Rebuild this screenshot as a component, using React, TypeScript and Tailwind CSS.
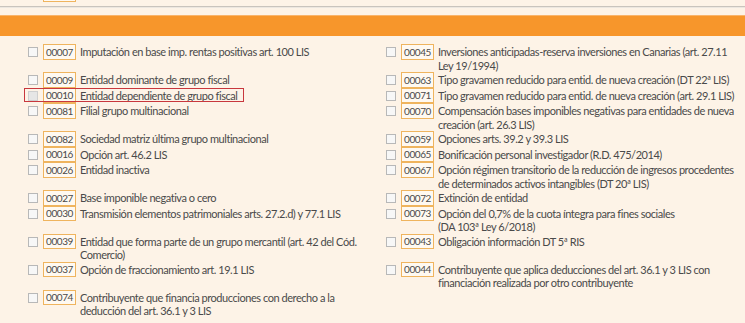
import React from "react";

type Item = {
  code: string;
  lines: string[];
  disabled?: boolean;
  highlight?: boolean;
};

type Row = [Item | null, Item | null];

const rows: Row[] = [
  [
    { code: "00007", lines: ["Imputación en base imp. rentas positivas art. 100 LIS"] },
    { code: "00045", lines: ["Inversiones anticipadas-reserva inversiones en Canarias (art. 27.11", "Ley 19/1994)"] },
  ],
  [
    { code: "00009", lines: ["Entidad dominante de grupo fiscal"] },
    { code: "00063", lines: ["Tipo gravamen reducido para entid. de nueva creación (DT 22ª LIS)"] },
  ],
  [
    { code: "00010", lines: ["Entidad dependiente de grupo fiscal"], disabled: true, highlight: true },
    { code: "00071", lines: ["Tipo gravamen reducido para entid. de nueva creación (art. 29.1 LIS)"] },
  ],
  [
    { code: "00081", lines: ["Filial grupo multinacional"] },
    { code: "00070", lines: ["Compensación bases imponibles negativas para entidades de nueva", "creación (art. 26.3 LIS)"] },
  ],
  [
    { code: "00082", lines: ["Sociedad matriz última grupo multinacional"] },
    { code: "00059", lines: ["Opciones arts. 39.2 y 39.3 LIS"] },
  ],
  [
    { code: "00016", lines: ["Opción art. 46.2 LIS"] },
    { code: "00065", lines: ["Bonificación personal investigador (R.D. 475/2014)"] },
  ],
  [
    { code: "00026", lines: ["Entidad inactiva"] },
    { code: "00067", lines: ["Opción régimen transitorio de la reducción de ingresos procedentes", "de determinados activos intangibles (DT 20ª LIS)"] },
  ],
  [
    { code: "00027", lines: ["Base imponible negativa o cero"] },
    { code: "00072", lines: ["Extinción de entidad"] },
  ],
  [
    { code: "00030", lines: ["Transmisión elementos patrimoniales arts. 27.2.d) y 77.1 LIS"] },
    { code: "00073", lines: ["Opción del 0,7% de la cuota íntegra para fines sociales", "(DA 103ª Ley 6/2018)"] },
  ],
  [
    { code: "00039", lines: ["Entidad que forma parte de un grupo mercantil (art. 42 del Cód.", "Comercio)"] },
    { code: "00043", lines: ["Obligación información DT 5ª RIS"] },
  ],
  [
    { code: "00037", lines: ["Opción de fraccionamiento art. 19.1 LIS"] },
    { code: "00044", lines: ["Contribuyente que aplica deducciones del art. 36.1 y 3 LIS con", "financiación realizada por otro contribuyente"] },
  ],
  [
    { code: "00074", lines: ["Contribuyente que financia producciones con derecho a la", "deducción del art. 36.1 y 3 LIS"] },
    null,
  ],
];

function Option({ item }: { item: Item }) {
  return (
    <div className="relative flex items-start">
      {item.highlight && (
        <span className="absolute left-[-4px] top-[0.5px] h-[14px] w-[220px] border-[1.5px] border-[#c8373d]" />
      )}
      <span
        className={
          "mt-[3px] h-[10px] w-[10px] shrink-0 border " +
          (item.disabled
            ? "border-[#cfcfcf] bg-[#e6e6e6]"
            : "border-[#b8b8b8] bg-[#f7f7f7]")
        }
      />
      <span className="ml-[5px] flex h-[15.5px] w-[33px] shrink-0 items-center justify-center border border-[#efb45e] bg-[#fff9f1] text-[10px] leading-none tracking-[-0.4px] text-[#4a4a4a]">
        {item.code}
      </span>
      <div className="ml-[4px] mt-[1px] text-[11px] leading-[13.5px] tracking-[-0.45px] text-[#4a4a4a]">
        {item.lines.map((line, i) => (
          <div key={i} className="whitespace-nowrap">
            {line}
          </div>
        ))}
      </div>
    </div>
  );
}

export default function App(): React.ReactElement {
  return (
    <div
      className="h-[323px] w-[745px] overflow-hidden bg-[#fdf3e7]"
      style={{ fontFamily: "Lato, 'Noto Sans', sans-serif" }}
    >
      <div className="h-[6px] pl-[43px]">
        <div className="h-[2px] w-[33px] border-x border-b border-[#efb45e] bg-[#fff9f1]" />
      </div>
      <div className="h-[2px] border-t border-[#c9c4bd] bg-[#ece7e0]" />
      <div className="mt-[7px] h-[21px] border-t border-[#f9b46a] bg-[#f7962b]" />

      <div className="grid grid-cols-[358px_1fr] pl-[28px] pt-[8px]">
        {rows.map((row, r) => (
          <React.Fragment key={r}>
            <div>{row[0] && <Option item={row[0]} />}</div>
            <div>{row[1] && <Option item={row[1]} />}</div>
          </React.Fragment>
        ))}
      </div>
    </div>
  );
}
